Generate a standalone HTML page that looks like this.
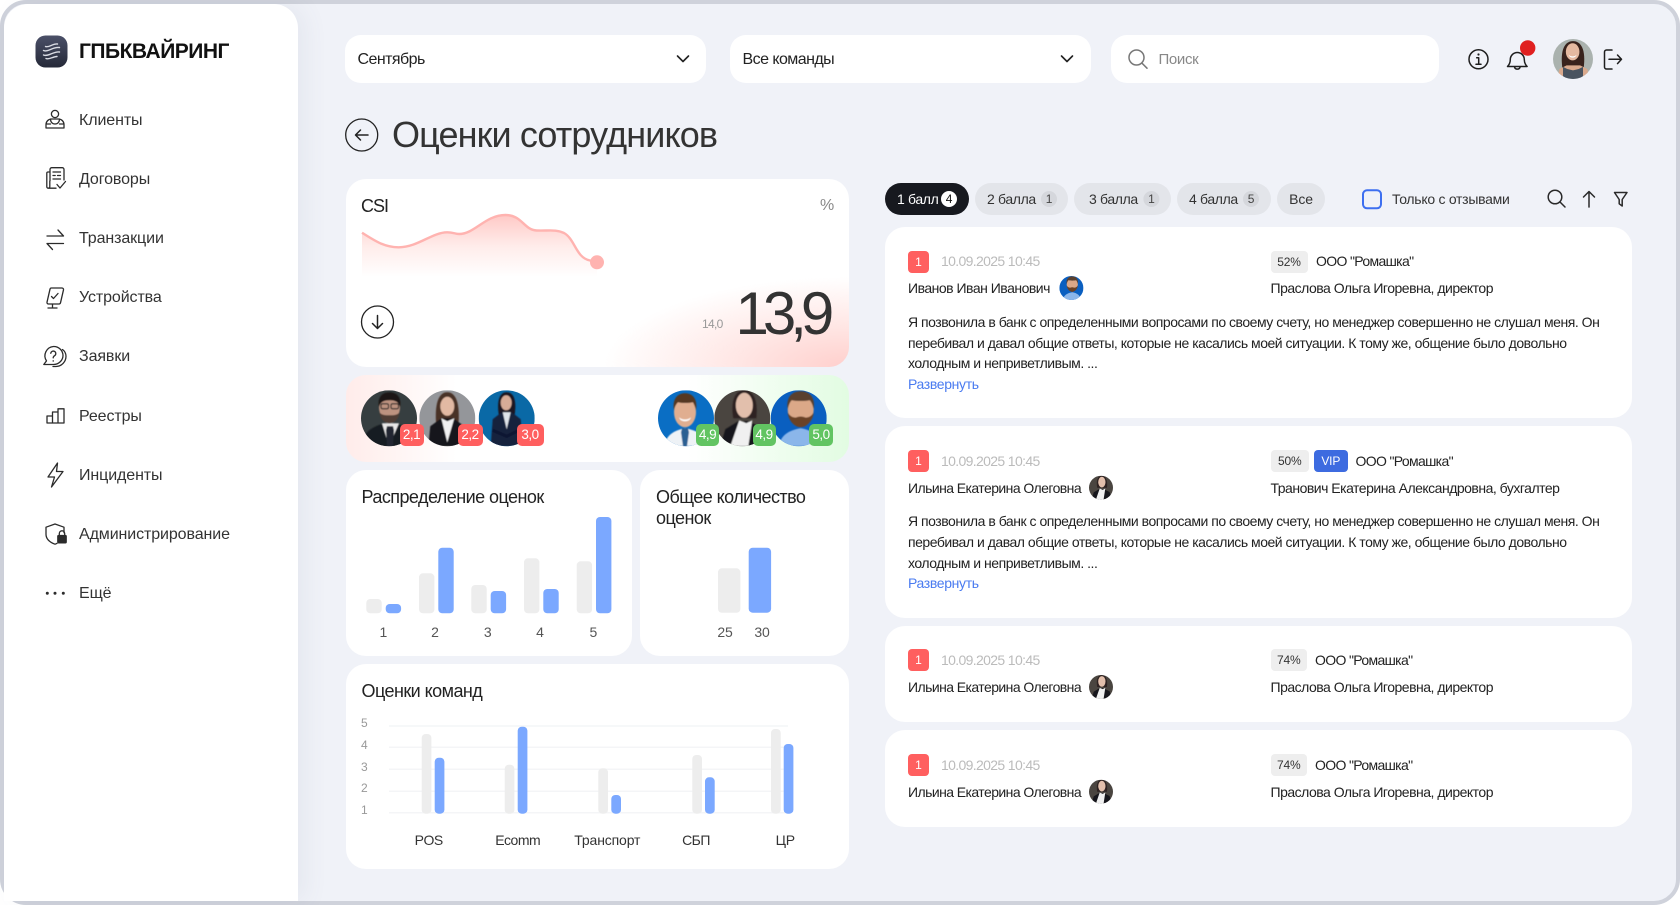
<!DOCTYPE html>
<html lang="ru"><head><meta charset="utf-8"><title>Оценки сотрудников</title>
<style>
*{box-sizing:border-box}
html,body{margin:0;padding:0;width:1680px;height:905px;overflow:hidden;background:#fff;font-family:"Liberation Sans",sans-serif;color:#222}
#frame{position:absolute;left:0;top:0;width:1680px;height:905px;border:4px solid #cfd2db;border-radius:26px;background:#f0f2f8;overflow:hidden}
.b{position:absolute;background:#fff}
.r20{border-radius:20px}
.t{position:absolute;white-space:nowrap;transform:translateY(-50%);font-size:14px;line-height:20px;letter-spacing:-.5px}
.c{transform:translate(-50%,-50%);letter-spacing:-.15px}
.m{font-size:16px;color:#333;left:79px;letter-spacing:-.1px}
.h{font-size:18px;color:#222;letter-spacing:-.55px}
.p{position:absolute;top:183px;height:32px;border-radius:16px;background:#e3e5ea}
.g{color:#bbb;letter-spacing:-.65px}
.co{letter-spacing:-.65px}
.pl{letter-spacing:-.35px}
.na{letter-spacing:-.57px}
.tag{position:absolute;height:22px;border-radius:4px;background:#eee;font-size:12px;line-height:22px;text-align:center;color:#333;letter-spacing:-.2px}
.one{position:absolute;width:21px;height:22px;border-radius:4px;background:#ff5f5f;color:#fff;font-size:12px;line-height:22px;text-align:center;left:908px}
.sc{position:absolute;top:424px;height:22px;border-radius:5px;color:#fff;font-size:13.5px;line-height:22px;text-align:center;letter-spacing:-.5px}
.l{left:908px;color:#222;letter-spacing:-.48px}
.bl{left:908px;color:#4a7bf0;letter-spacing:-.35px}
</style></head><body>
<div id="frame"></div>
<div class="b" style="left:4px;top:4px;width:294px;height:897px;border-radius:24px 24px 0 0;box-shadow:8px 0 24px rgba(90,100,130,.07)"></div>
<div class="b" style="left:345px;top:35px;width:361px;height:48px;border-radius:16px"></div>
<div class="b" style="left:730px;top:35px;width:361px;height:48px;border-radius:16px"></div>
<div class="b" style="left:1111px;top:35px;width:328px;height:48px;border-radius:16px"></div>
<div class="b r20" style="left:345.5px;top:179px;width:503.5px;height:188px;background:radial-gradient(ellipse 245px 90px at 100% 100%,#ffcfcc 0,#ffe6e4 45%,rgba(255,255,255,0) 100%),#fff"></div>
<div class="b r20" style="left:346px;top:375px;width:503px;height:87px;background:linear-gradient(90deg,#ffecea 0,#fff 22%,#fff 68%,#e2fce2 100%)"></div>
<div class="b r20" style="left:346px;top:470px;width:286px;height:186px"></div>
<div class="b r20" style="left:640px;top:470px;width:209px;height:186px"></div>
<div class="b r20" style="left:346px;top:664px;width:503px;height:205px"></div>
<div class="b r20" style="left:885px;top:227px;width:747px;height:191px"></div>
<div class="b r20" style="left:885px;top:426px;width:747px;height:192px"></div>
<div class="b r20" style="left:885px;top:626px;width:747px;height:96px"></div>
<div class="b r20" style="left:885px;top:730px;width:747px;height:97px"></div>
<div class="p" style="left:885px;width:84px;background:#17191f"></div>
<div class="p" style="left:975px;width:93px"></div>
<div class="p" style="left:1074px;width:97px"></div>
<div class="p" style="left:1177px;width:94px"></div>
<div class="p" style="left:1277px;width:48px"></div>

<svg width="1680" height="905" style="position:absolute;left:0;top:0" fill="none">
<defs>
<linearGradient id="lg" x1="0" y1="0" x2="0" y2="1"><stop offset="0" stop-color="#4b5068"/><stop offset="1" stop-color="#252938"/></linearGradient>
<linearGradient id="cf" x1="0" y1="0" x2="0" y2="1"><stop offset="0" stop-color="#ffc9c6"/><stop offset=".5" stop-color="#ffecea"/><stop offset="1" stop-color="#fff"/></linearGradient>
<clipPath id="cc"><circle cx="28" cy="28" r="28"/></clipPath>
<filter id="sf" x="-5%" y="-5%" width="110%" height="110%"><feGaussianBlur stdDeviation=".5"/></filter>
<symbol id="a1" viewBox="0 0 56 56"><g clip-path="url(#cc)"><rect width="56" height="56" fill="#363e40"/><g filter="url(#sf)"><path d="M0 56c2-13 9-18 20-22h17c10 3 17 9 19 22z" fill="#181d24"/><path d="M21 33l7 23 10-23z" fill="#e8e8e8"/><path d="M26 36h6l1 4-1 16h-6l-1-16z" fill="#202830"/><ellipse cx="28.500" cy="17" rx="10.500" ry="14" fill="#bd9380"/><path d="M18 17C16 6 22 2 28.500 2S41 6 39 17c-1-4-3-7-10.500-7S19 13 18 17z" fill="#1d1816"/><path d="M18.500 22c1 8 6 11 10 11s9-3 10-11c-2 3-6 3-10 3s-8 0-10-3z" fill="#4f3d34"/><rect x="20" y="13.500" width="7.500" height="5" rx="1.500" stroke="#222" stroke-width="1.100"/><rect x="30" y="13.500" width="7.500" height="5" rx="1.500" stroke="#222" stroke-width="1.100"/></g></g></symbol>
<symbol id="a2" viewBox="0 0 56 56"><g clip-path="url(#cc)"><rect width="56" height="56" fill="#94969a"/><g filter="url(#sf)"><path d="M17 36C15 14 19 2 28 2s13 12 11 34z" fill="#4a3025"/><ellipse cx="28" cy="16" rx="7" ry="9.500" fill="#e2b9a3"/><path d="M9 56l2-20 11-8h12l11 8 2 20z" fill="#17181c"/><path d="M22 28l6 24 7-24-7 3z" fill="#f1f1f1"/></g></g></symbol>
<symbol id="a3" viewBox="0 0 56 56"><g clip-path="url(#cc)"><rect width="56" height="56" fill="#0a69a6"/><g filter="url(#sf)"><path d="M20 24C18 10 21 2 28 2s10 8 8 22l-2 4H22z" fill="#1a1820"/><ellipse cx="27.500" cy="12.500" rx="5.500" ry="7.500" fill="#d7ac97"/><path d="M12 56l2-27 9-7h10l9 7 2 27z" fill="#15203e"/><path d="M24 22l4 17 4-17z" fill="#dfe4ea"/><path d="M14 40l14 6 12-6" stroke="#0c1730" stroke-width="3"/></g></g></symbol>
<symbol id="a4" viewBox="0 0 56 56"><g clip-path="url(#cc)"><rect width="56" height="56" fill="#0a6ec4"/><g filter="url(#sf)"><path d="M6 56c2-11 10-16 21-18 12 2 21 7 23 18z" fill="#eef2f6"/><path d="M24 38h6l1 4-2 14h-4l-2-14z" fill="#2a5f92"/><ellipse cx="27" cy="22" rx="11" ry="15" fill="#e0ae90"/><path d="M16 20C14 8 20 3 27 3s13 5 11 17c-1-4-2-6-3-8-5 1-11 1-15 0-2 2-3 4-4 8z" fill="#553823"/><path d="M21 27c3 3 9 3 12 0-1 3-3 4-6 4s-5-1-6-4z" fill="#fff"/></g></g></symbol>
<symbol id="a5" viewBox="0 0 56 56"><g clip-path="url(#cc)"><rect width="56" height="56" fill="#4a4540"/><g filter="url(#sf)"><path d="M19 28C16 10 21 0 30 0s14 10 12 28z" fill="#2e2420"/><ellipse cx="30" cy="15" rx="8.500" ry="12.500" fill="#e2bfac"/><path d="M6 56l5-17 13-8h10l14 7 6 18z" fill="#17181a"/><path d="M25 30l-9 26h18l4-26-6 3z" fill="#f0f0f0"/></g></g></symbol>
<symbol id="a6" viewBox="0 0 56 56"><g clip-path="url(#cc)"><rect width="56" height="56" fill="#0a5fc0"/><g filter="url(#sf)"><path d="M8 56c2-11 10-16 22-18 12 2 18 7 20 18z" fill="#8bb6ea"/><ellipse cx="30" cy="19" rx="13" ry="16" fill="#dba888"/><path d="M17 19C15 6 22 1 30 1s15 5 13 18c-1-4-2-7-4-9-5 1-13 1-18 0-2 2-3 5-4 9z" fill="#5a3f2e"/><path d="M17 22c1 10 8 15 13 15s12-5 13-15c-2 4-6 6-9 5-3-1-5-1-8 0-3 1-7-1-9-5z" fill="#6b4328"/></g></g></symbol>
<symbol id="a7" viewBox="0 0 56 56"><g clip-path="url(#cc)"><rect width="56" height="56" fill="#aab2ae"/><g filter="url(#sf)"><path d="M13 40C10 16 16 3 28 3s18 13 15 37z" fill="#38231b"/><path d="M6 56l3-14 10-5h19l10 5 3 14z" fill="#d9a98d"/><ellipse cx="27.500" cy="18" rx="9.500" ry="12" fill="#e5b9a0"/><path d="M14 56V39l6 3 8 2 8-2 6-3v17z" fill="#48535e"/><path d="M22 22c3 3 8 3 11 0-1 3-3 4-5.500 4s-4.500-1-5.500-4z" fill="#fff"/></g></g></symbol>
</defs>

<!-- logo -->
<rect x="35.500" y="35.500" width="32" height="32" rx="10" fill="url(#lg)"/>
<g stroke="#d9dbe3" stroke-width="1.400" stroke-linecap="round"><path d="M45.500 46.500c3 1.500 7-3 12-2.500"/><path d="M43.500 50.500c5 2 9-4 16-3"/><path d="M43.500 55c5 2 10-4 16-3"/><path d="M46 58.500c3 1.500 7-2 11-2"/></g>

<g stroke="#2b2b2b" stroke-width="1.300" stroke-linecap="round" stroke-linejoin="round">
<!-- clients -->
<circle cx="55" cy="114" r="3.600"/><path d="M46 128v-3.500a5.500 5.500 0 0 1 5.500-5.500h7a5.500 5.500 0 0 1 5.500 5.500V128zM46 124h4.500M59.500 124H64M50.500 119c0 3 1.800 5 4.500 5s4.500-2 4.500-5"/>
<!-- contracts -->
<path d="M50 181v-11.500a1.800 1.800 0 0 1 1.800-1.800h10.400a1.800 1.800 0 0 1 1.800 1.800V180M50 172h-2a1.200 1.200 0 0 0-1.200 1.200v13.500a1.500 1.500 0 0 0 3 0V181M48.500 188.200H56M53 172h7.500M53 175.500h2.200M57.500 175.500h3M53 179h7.500M57 184.500l3 3.500 5.500-6.500"/>
<!-- transactions -->
<path d="M47 236h16.500l-5.500-6M63.500 243.500H47l5.500 6"/>
<!-- device -->
<path d="M51.500 288h10.500a1.500 1.500 0 0 1 1.500 1.800l-3 13a1.500 1.500 0 0 1-1.500 1.200H48.500a1.500 1.500 0 0 1-1.500-1.800l3-13a1.500 1.500 0 0 1 1.500-1.200zM51.500 296.500l2 2 4.500-5M52.500 304v3.800M48 308h9"/>
<!-- requests -->
<path d="M53.500 346.500a9.200 9.200 0 0 1 9.500 9c0 5-4.500 9-9.500 9H43.800l2.700-3.600a9.300 9.300 0 0 1 7-14.400zM62.500 349.500c2.500 1.800 3.500 4.200 3.500 6.800 0 5.500-4.500 10.200-10 10.200h-3M50.800 353.300a2.500 2.500 0 1 1 3.800 2.400c-1 .6-1.400 1.200-1.400 2.200M53.200 360.800v.3"/>
<!-- registries -->
<path d="M47 423h17V408.800h-6v14.200M52.500 423v-11h5.500M47 423v-7h5.500"/>
<!-- incidents -->
<path d="M57.500 463L48 477h6.500l-3 10 11.500-15.500h-6.500l1-8.500z"/>
<!-- admin -->
<path d="M55 524l9 3.200v5.500M55 524l-9 3.200v7c0 4.800 3.800 8 9 10 .7-.3 1.300-.5 2-.8"/>
<path d="M59.300 535.500v-2a2.700 2.700 0 0 1 5.400 0v2"/>
<rect x="57.800" y="535.500" width="8.400" height="7.300" rx=".8" fill="#2b2b2b"/>
</g>
<g fill="#2b2b2b"><circle cx="47.300" cy="593.300" r="1.500"/><circle cx="55" cy="593.300" r="1.500"/><circle cx="63.300" cy="593.300" r="1.500"/></g>

<!-- chevrons, search -->
<g stroke="#222" stroke-width="1.600" stroke-linecap="round" stroke-linejoin="round"><path d="M677.500 56l5.500 5.500 5.500-5.500"/><path d="M1061.500 56l5.500 5.500 5.500-5.500"/></g>
<g stroke="#777" stroke-width="1.500" stroke-linecap="round"><circle cx="1136.500" cy="57.500" r="7.500"/><path d="M1142 63.200l5 5"/></g>

<!-- top right -->
<g stroke="#1e1e1e" stroke-width="1.500" stroke-linecap="round" stroke-linejoin="round">
<circle cx="1478.500" cy="59.300" r="9.500"/><path d="M1476.700 57.800h2v6.200M1476 64.200h5"/>
<path d="M1507.500 66.500c1.800-1.800 2.800-3.500 2.800-7a7 7 0 0 1 14 0c0 3.500 1 5.200 2.800 7zM1514.500 67a2.900 2.900 0 0 0 5.600 0"/>
<path d="M1612 50h-5.500a2 2 0 0 0-2 2v15a2 2 0 0 0 2 2h5.500M1609 59.300h12.500M1617.500 55l4 4.300-4 4.300"/>
</g>
<circle cx="1478.500" cy="54.500" r="1.100" fill="#1e1e1e"/>
<circle cx="1527.700" cy="48" r="7.700" fill="#e02020"/>
<use href="#a7" x="1553" y="39" width="40" height="40"/>

<!-- back -->
<g stroke="#222" stroke-width="1.300" stroke-linecap="round" stroke-linejoin="round"><circle cx="361.700" cy="135" r="16"/><path d="M368 135h-12.500M360.500 130l-5 5 5 5" stroke-width="1.500"/>
<circle cx="377.500" cy="322" r="16"/><path d="M377.500 315.500v13M372.500 323.500l5 5 5-5" stroke-width="1.500"/></g>

<!-- CSI curve -->
<path d="M362 232.700C375 241 385 247.500 399 247.300 418 247 432 232.500 447 232.300 453 232.200 455 234 459 234 475 234 485 215 505.600 215 522 215 524 230 536.600 230.500 548 231 556 229 564 233 575 239 576 258 590 260.500L597 262.300V277H362z" fill="url(#cf)"/>
<path d="M362 232.700C375 241 385 247.500 399 247.300 418 247 432 232.500 447 232.300 453 232.200 455 234 459 234 475 234 485 215 505.600 215 522 215 524 230 536.600 230.500 548 231 556 229 564 233 575 239 576 258 590 260.500L597 262.300" stroke="#ffb3b0" stroke-width="2.400"/>
<circle cx="597" cy="262.300" r="7" fill="#ffb3b0"/>

<!-- people -->
<use href="#a1" x="361" y="390.300" width="56" height="56"/>
<use href="#a2" x="419.300" y="390.300" width="56" height="56"/>
<use href="#a3" x="478.700" y="390.300" width="56" height="56"/>
<use href="#a4" x="658" y="390.300" width="56" height="56"/>
<use href="#a5" x="714.300" y="390.300" width="56" height="56"/>
<use href="#a6" x="770.700" y="390.300" width="56" height="56"/>

<!-- distribution bars -->
<g fill="#ededed">
<rect x="366.300" y="599" width="15.400" height="14.300" rx="4"/><rect x="419" y="573.300" width="15.400" height="40" rx="4"/><rect x="471.300" y="585" width="15.400" height="28.300" rx="4"/><rect x="524" y="558.300" width="15.400" height="55" rx="4"/><rect x="576.700" y="561.300" width="15.400" height="52" rx="4"/>
<rect x="718" y="568.300" width="22.400" height="44.500" rx="4"/>
</g>
<g fill="#7ba8ff">
<rect x="385.700" y="604" width="15.400" height="9.300" rx="4"/><rect x="438.300" y="547.700" width="15.400" height="65.600" rx="4"/><rect x="490.700" y="591" width="15.400" height="22.300" rx="4"/><rect x="543.300" y="589" width="15.400" height="24.300" rx="4"/><rect x="596" y="517" width="15.400" height="96.300" rx="4"/>
<rect x="748.700" y="547.700" width="22.400" height="65" rx="4"/>
</g>

<!-- team chart -->
<g stroke="#f4f5f7" stroke-width="1.500"><path d="M389 726H788M389 747.300H788M389 769.300H788M389 791.300H788M389 812.700H788"/></g>
<g fill="#ededed">
<rect x="421.700" y="734" width="9.700" height="79.700" rx="4"/><rect x="504.700" y="764.700" width="9.700" height="49" rx="4"/><rect x="598.300" y="768.300" width="9.700" height="45.400" rx="4"/><rect x="692.300" y="755" width="9.700" height="58.700" rx="4"/><rect x="771" y="729" width="9.700" height="84.700" rx="4"/>
</g>
<g fill="#7ba8ff">
<rect x="434.700" y="757.700" width="9.700" height="56" rx="4"/><rect x="517.700" y="726.700" width="9.700" height="87" rx="4"/><rect x="611.300" y="795" width="9.700" height="18.700" rx="4"/><rect x="705" y="777.300" width="9.700" height="36.400" rx="4"/><rect x="783.700" y="744" width="9.700" height="69.700" rx="4"/>
</g>

<!-- filter row -->
<rect x="1363" y="190.300" width="18" height="18" rx="4" stroke="#3d6ff0" stroke-width="2"/>
<g stroke="#2a2a2a" stroke-width="1.500" stroke-linecap="round" stroke-linejoin="round"><circle cx="1555" cy="197" r="6.800"/><path d="M1560 202l5 5M1589 191.500V207M1583.500 197l5.500-5.500 5.500 5.500M1614.500 192.500h12.500l-4.800 7v6.500l-3-2.200v-4.300z"/></g>
<circle cx="949" cy="199" r="8" fill="#fff"/>
<g fill="#d5d7dc"><circle cx="1049" cy="199" r="8"/><circle cx="1151.400" cy="199" r="8"/><circle cx="1251" cy="199" r="8"/></g>

<!-- list avatars -->
<use href="#a6" x="1059.400" y="276" width="24" height="24"/>
<use href="#a5" x="1089" y="475.700" width="24" height="24"/>
<use href="#a5" x="1089" y="675" width="24" height="24"/>
<use href="#a5" x="1089" y="779.700" width="24" height="24"/>
</svg>

<!-- sidebar text -->
<div class="t" style="left:79px;top:52px;font-size:21px;font-weight:700;color:#111;letter-spacing:-.5px">ГПБКВАЙРИНГ</div>
<div class="t m" style="top:121px">Клиенты</div>
<div class="t m" style="top:180px">Договоры</div>
<div class="t m" style="top:239px">Транзакции</div>
<div class="t m" style="top:298px">Устройства</div>
<div class="t m" style="top:357px">Заявки</div>
<div class="t m" style="top:417px">Реестры</div>
<div class="t m" style="top:476px">Инциденты</div>
<div class="t m" style="top:535px">Администрирование</div>
<div class="t m" style="top:594px">Ещё</div>

<!-- top -->
<div class="t" style="left:357.500px;top:59.500px;font-size:16px;letter-spacing:-.55px">Сентябрь</div>
<div class="t" style="left:742.500px;top:59.500px;font-size:16px;letter-spacing:-.55px">Все команды</div>
<div class="t" style="left:1158.500px;top:59.500px;font-size:15px;color:#888;letter-spacing:-.35px">Поиск</div>
<div class="t" style="left:392px;top:135px;font-size:36px;line-height:44px;color:#333;letter-spacing:-.87px">Оценки сотрудников</div>

<!-- CSI -->
<div class="t h" style="left:361px;top:206px;letter-spacing:-1px">CSI</div>
<div class="t" style="left:820px;top:206px;font-size:16px;color:#888;letter-spacing:0">%</div>
<div class="t" style="left:702px;top:324px;font-size:12px;color:#999;letter-spacing:-.7px">14,0</div>
<div class="t" style="left:735.500px;top:314px;font-size:60px;line-height:70px;color:#333;letter-spacing:-6px">13,9</div>

<!-- people scores -->
<div class="sc" style="left:399.500px;width:24px;background:#ff5f5f">2,1</div>
<div class="sc" style="left:457.500px;width:25px;background:#ff5f5f">2,2</div>
<div class="sc" style="left:516.500px;width:27px;background:#ff5f5f">3,0</div>
<div class="sc" style="left:696px;width:23px;background:#62c462">4,9</div>
<div class="sc" style="left:752.500px;width:23px;background:#62c462">4,9</div>
<div class="sc" style="left:809px;width:24px;background:#62c462">5,0</div>

<!-- cards headings -->
<div class="t h" style="left:361.500px;top:496.500px">Распределение оценок</div>
<div class="t h" style="left:656px;top:496.500px">Общее количество</div>
<div class="t h" style="left:656px;top:517.500px">оценок</div>
<div class="t h" style="left:361.500px;top:691px">Оценки команд</div>

<div class="t c" style="left:383.300px;top:632px;color:#555">1</div>
<div class="t c" style="left:435px;top:632px;color:#555">2</div>
<div class="t c" style="left:487.700px;top:632px;color:#555">3</div>
<div class="t c" style="left:540px;top:632px;color:#555">4</div>
<div class="t c" style="left:593.300px;top:632px;color:#555">5</div>
<div class="t c" style="left:725px;top:632px;color:#555">25</div>
<div class="t c" style="left:762px;top:632px;color:#555">30</div>

<div class="t c" style="left:364.300px;top:723.300px;font-size:12px;color:#999">5</div>
<div class="t c" style="left:364.300px;top:745px;font-size:12px;color:#999">4</div>
<div class="t c" style="left:364.300px;top:766.700px;font-size:12px;color:#999">3</div>
<div class="t c" style="left:364.300px;top:788.300px;font-size:12px;color:#999">2</div>
<div class="t c" style="left:364.300px;top:810px;font-size:12px;color:#999">1</div>
<div class="t c" style="left:428.700px;top:840px;color:#333;letter-spacing:-.5px">POS</div>
<div class="t c" style="left:517.700px;top:840px;color:#333;letter-spacing:-.5px">Ecomm</div>
<div class="t c" style="left:607.300px;top:840px;color:#333">Транспорт</div>
<div class="t c" style="left:696px;top:840px;color:#333;letter-spacing:-.5px">СБП</div>
<div class="t c" style="left:785.300px;top:840px;color:#333">ЦР</div>

<!-- filter labels -->
<div class="t pl" style="left:897px;top:199px;color:#fff">1 балл</div>
<div class="t c" style="left:949px;top:199px;font-size:12px;color:#111">4</div>
<div class="t pl" style="left:987px;top:199px;color:#333">2 балла</div>
<div class="t c" style="left:1049px;top:199px;font-size:12px;color:#444">1</div>
<div class="t pl" style="left:1089px;top:199px;color:#333">3 балла</div>
<div class="t c" style="left:1151.400px;top:199px;font-size:12px;color:#444">1</div>
<div class="t pl" style="left:1189px;top:199px;color:#333">4 балла</div>
<div class="t c" style="left:1251px;top:199px;font-size:12px;color:#444">5</div>
<div class="t c" style="left:1301px;top:199px;color:#333">Все</div>
<div class="t" style="left:1392px;top:199px;color:#333;letter-spacing:-.27px">Только с отзывами</div>

<!-- card 1 -->
<div class="one" style="top:250.500px">1</div>
<div class="t g" style="left:941px;top:261.200px">10.09.2025 10:45</div>
<div class="tag" style="left:1270.500px;top:250.500px;width:37px">52%</div>
<div class="t co" style="left:1316px;top:261.200px">ООО "Ромашка"</div>
<div class="t" style="left:908px;top:288px">Иванов Иван Иванович</div>
<div class="t" style="left:1270.500px;top:288px">Праслова Ольга Игоревна, директор</div>
<div class="t l" style="top:321.500px">Я позвонила в банк с определенными вопросами по своему счету, но менеджер совершенно не слушал меня. Он</div>
<div class="t l" style="top:342.500px">перебивал и давал общие ответы, которые не касались моей ситуации. К тому же, общение было довольно</div>
<div class="t l" style="top:363px">холодным и неприветливым. ...</div>
<div class="t bl" style="top:384px">Развернуть</div>

<!-- card 2 -->
<div class="one" style="top:449.500px">1</div>
<div class="t g" style="left:941px;top:460.500px">10.09.2025 10:45</div>
<div class="tag" style="left:1270.500px;top:449.500px;width:38.500px">50%</div>
<div class="tag" style="left:1314px;top:449.500px;width:33.500px;background:#3d6be0;color:#fff">VIP</div>
<div class="t co" style="left:1355.500px;top:460.500px">ООО "Ромашка"</div>
<div class="t na" style="left:908px;top:487.500px">Ильина Екатерина Олеговна</div>
<div class="t" style="left:1270.500px;top:487.500px">Транович Екатерина Александровна, бухгалтер</div>
<div class="t l" style="top:521px">Я позвонила в банк с определенными вопросами по своему счету, но менеджер совершенно не слушал меня. Он</div>
<div class="t l" style="top:542px">перебивал и давал общие ответы, которые не касались моей ситуации. К тому же, общение было довольно</div>
<div class="t l" style="top:562.500px">холодным и неприветливым. ...</div>
<div class="t bl" style="top:583.300px">Развернуть</div>

<!-- card 3 -->
<div class="one" style="top:649px">1</div>
<div class="t g" style="left:941px;top:660px">10.09.2025 10:45</div>
<div class="tag" style="left:1270.500px;top:649px;width:36.500px">74%</div>
<div class="t co" style="left:1315px;top:660px">ООО "Ромашка"</div>
<div class="t na" style="left:908px;top:686.500px">Ильина Екатерина Олеговна</div>
<div class="t" style="left:1270.500px;top:686.500px">Праслова Ольга Игоревна, директор</div>

<!-- card 4 -->
<div class="one" style="top:754px">1</div>
<div class="t g" style="left:941px;top:765px">10.09.2025 10:45</div>
<div class="tag" style="left:1270.500px;top:754px;width:36.500px">74%</div>
<div class="t co" style="left:1315px;top:765px">ООО "Ромашка"</div>
<div class="t na" style="left:908px;top:791.500px">Ильина Екатерина Олеговна</div>
<div class="t" style="left:1270.500px;top:791.500px">Праслова Ольга Игоревна, директор</div>
</body></html>
